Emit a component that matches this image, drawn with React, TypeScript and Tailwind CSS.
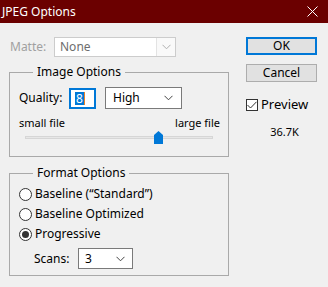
import React from 'react'

function Chevron({ color = '#444' }: { color?: string }) {
  return (
    <svg width="9" height="6" viewBox="0 0 9 6" fill="none">
      <path d="M0.5 0.8 L4.5 4.8 L8.5 0.8" stroke={color} strokeWidth="1" />
    </svg>
  )
}

function Radio({ checked, label }: { checked?: boolean; label: string }) {
  return (
    <div className="flex items-center h-[20px]">
      <span className="w-[13px] h-[13px] rounded-full border border-[#333] bg-white flex items-center justify-center">
        {checked && <span className="w-[7px] h-[7px] rounded-full bg-[#333]" />}
      </span>
      <span className="ml-[3px]">{label}</span>
    </div>
  )
}

export default function App() {
  return (
    <div
      className="w-[328px] h-[287px] bg-[#f0f0f0] text-[12px] text-black overflow-hidden"
      style={{ fontFamily: '"Noto Sans", "Open Sans", sans-serif' }}
    >
      {/* title bar */}
      <div className="h-[23px] bg-[#6b0000] flex items-center justify-between pl-[2px] pr-[10px] text-white text-[12px]">
        <span>JPEG Options</span>
        <svg width="11" height="11" viewBox="0 0 11 11">
          <path d="M0.5 0.5 L10.5 10.5 M10.5 0.5 L0.5 10.5" stroke="#fff" strokeWidth="1" />
        </svg>
      </div>

      <div className="flex">
        {/* left column */}
        <div className="w-[229px] pl-[9px]">
          <div className="flex items-center mt-[14px] h-[20px]">
            <span className="ml-[1px] w-[44px] text-[#a0a0a0]">Matte:</span>
            <div className="w-[122px] h-[20px] border border-[#cccccc] bg-[#f9f9f9] flex">
              <div className="w-[102px] bg-white border-r border-[#e3e3e3] flex items-center pl-[5px] text-[#6d6d6d]">
                None
              </div>
              <div className="flex-1 flex items-center justify-center">
                <Chevron color="#b0b0b0" />
              </div>
            </div>
          </div>

          {/* image options */}
          <fieldset className="mt-[7px] border border-[#a9a9a9] h-[93px] pl-[9px]">
            <legend className="ml-[14px] px-[4px] leading-[16px]">Image Options</legend>
            <div className="flex items-center mt-[7px]">
              <span className="w-[50px]">Quality:</span>
              <div className="w-[27px] h-[21px] border-2 border-[#0078d7] bg-white flex items-center pl-[4px]">
                <span className="bg-[#0078d7] text-white leading-[13px] px-[1px]">8</span>
                <span className="w-[1px] h-[13px] bg-[#e8822a]" />
              </div>
              <div className="ml-[9px] w-[77px] h-[22px] border border-[#7a7a7a] bg-white flex items-center justify-between pl-[7px] pr-[8px]">
                <span>High</span>
                <Chevron />
              </div>
            </div>
            <div className="flex justify-between w-[201px] mt-[6px] text-[11px] leading-[15px]">
              <span>small file</span>
              <span>large file</span>
            </div>
            <div className="relative ml-[6px] w-[188px] h-[14px] mt-[1px]">
              <div className="absolute left-0 right-0 top-[5px] h-[3px] bg-[#e7e7e7] border border-[#d6d6d6]" />
              <svg className="absolute left-[129px] top-0" width="9" height="13" viewBox="0 0 9 13">
                <path d="M0 4 L4.5 0 L9 4 L9 13 L0 13 Z" fill="#0078d7" />
              </svg>
            </div>
          </fieldset>

          {/* format options */}
          <fieldset className="mt-[8px] border border-[#a9a9a9] h-[111px] pl-[9px]">
            <legend className="ml-[14px] px-[4px] leading-[16px]">Format Options</legend>
            <div className="mt-[3px]">
              <Radio label={'Baseline (\u201CStandard\u201D)'} />
              <Radio label="Baseline Optimized" />
              <Radio checked label="Progressive" />
            </div>
            <div className="flex items-center mt-[4px] ml-[15px]">
              <span className="w-[44px]">Scans:</span>
              <div className="w-[55px] h-[21px] border border-[#7a7a7a] bg-white flex items-center justify-between pl-[6px] pr-[7px]">
                <span>3</span>
                <Chevron />
              </div>
            </div>
          </fieldset>
        </div>

        {/* right column */}
        <div className="ml-[17px] w-[71px] flex flex-col">
          <button className="mt-[14px] h-[18px] w-[71px] border-2 border-[#0078d7] bg-[#e1e1e1] flex items-center justify-center">
            OK
          </button>
          <button className="mt-[9px] h-[18px] w-[71px] border border-[#adadad] bg-[#e1e1e1] flex items-center justify-center">
            Cancel
          </button>
          <div className="flex items-center mt-[13px]">
            <span className="w-[12px] h-[12px] border border-[#333] bg-white flex items-center justify-center">
              <svg width="10" height="8" viewBox="0 0 10 8">
                <path d="M0.5 4 L3.5 7 L9.5 0.8" stroke="#333" strokeWidth="1" fill="none" />
              </svg>
            </span>
            <span className="ml-[3px] text-[13px]">Preview</span>
          </div>
          <div className="mt-[9px] text-[11px] text-center pl-[6px]">36.7K</div>
        </div>
      </div>
    </div>
  )
}
